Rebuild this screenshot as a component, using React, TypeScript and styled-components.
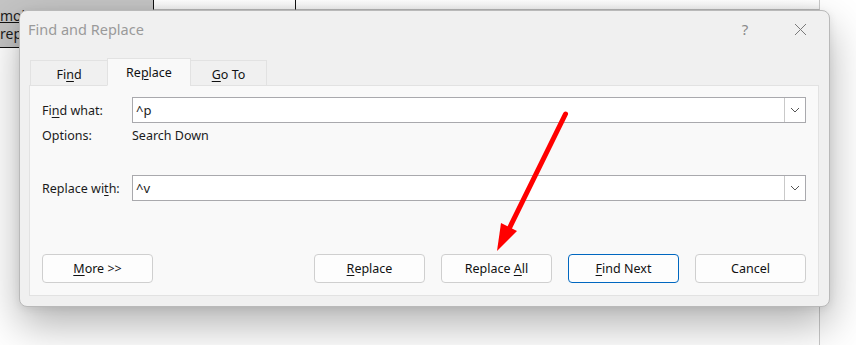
import styled, { createGlobalStyle } from 'styled-components'

const GlobalStyle = createGlobalStyle`
  html, body {
    margin: 0;
    padding: 0;
    background: #ffffff;
  }
  body {
    font-family: 'Noto Sans', 'Open Sans', sans-serif;
    color: #1b1b1b;
  }
`

const Page = styled.div`
  position: relative;
  width: 856px;
  height: 345px;
  overflow: hidden;
  background: #ffffff;
`

// document behind the dialog
const Sheet = styled.div`
  display: grid;
  grid-template-columns: 153px 142px 525px 36px;
  grid-template-rows: 10px 13px 25px 1fr;
  height: 100%;
`
const Cell = styled.div<{ $gray?: boolean; $left?: boolean; $bottom?: string; $right?: boolean; $lh?: number }>`
  background: ${(p) => (p.$gray ? '#c4c4c4' : '#ffffff')};
  border-left: ${(p) => (p.$left ? '1px solid #111' : 'none')};
  border-right: ${(p) => (p.$right ? '1px solid #c8c8c8' : 'none')};
  border-bottom: ${(p) => p.$bottom ?? 'none'};
  font-size: 14px;
  line-height: ${(p) => p.$lh ?? 20}px;
  overflow: hidden;
  white-space: nowrap;
  box-sizing: border-box;
`
const TopCell = styled(Cell)`
  background: linear-gradient(#ffffff, #f2f2f2);
`

const Dialog = styled.div`
  position: absolute;
  left: 19px;
  top: 10px;
  width: 811px;
  height: 297px;
  box-sizing: border-box;
  background: #f0f0f0;
  border: 1px solid #b9b9b9;
  border-radius: 8px;
  box-shadow: 0 18px 42px rgba(0, 0, 0, 0.3), 0 2px 8px rgba(0, 0, 0, 0.08);
  display: flex;
  flex-direction: column;
`
const TitleBar = styled.div`
  height: 38px;
  display: flex;
  align-items: center;
  padding: 0 0 0 8px;
`
const Title = styled.div`
  flex: 1;
  font-size: 14.5px;
  color: #9a9a9a;
  margin-top: -2px;
`
const TitleButton = styled.div<{ $w: number }>`
  width: ${(p) => p.$w}px;
  height: 38px;
  display: flex;
  align-items: center;
  justify-content: center;
  color: #8a8a8a;
  font-size: 15px;
  margin-top: -2px;
`

const Body = styled.div`
  padding: 9px 10px 10px 9px;
  display: flex;
  flex-direction: column;
  flex: 1;
`
const TabStrip = styled.div`
  display: flex;
  align-items: flex-end;
  height: 28px;
  padding-left: 1px;
  margin-bottom: -1px;
  position: relative;
  z-index: 1;
`
const Tab = styled.div<{ $active?: boolean; $w: number }>`
  width: ${(p) => p.$w}px;
  height: ${(p) => (p.$active ? 28 : 26)}px;
  box-sizing: border-box;
  display: flex;
  align-items: center;
  justify-content: center;
  padding-top: ${(p) => (p.$active ? 0 : 2)}px;
  font-size: 12.5px;
  background: ${(p) => (p.$active ? '#f9f9f9' : '#f0f0f0')};
  border: 1px solid #e2e2e2;
  border-bottom: ${(p) => (p.$active ? '1px solid #f9f9f9' : '1px solid #e2e2e2')};
  margin-left: ${(p) => (p.$active ? -1 : 0)}px;
  margin-right: ${(p) => (p.$active ? -1 : 0)}px;
  color: #111;
`
const Panel = styled.div`
  flex: 1;
  background: #f9f9f9;
  border: 1px solid #e2e2e2;
  padding: 11px 12px 12px 12px;
  display: flex;
  flex-direction: column;
`
const FieldRow = styled.div<{ $mt?: number }>`
  display: flex;
  align-items: center;
  margin-top: ${(p) => p.$mt ?? 0}px;
  font-size: 12.5px;
`
const Label = styled.div`
  width: 90px;
`
const Combo = styled.div`
  flex: 1;
  height: 26px;
  box-sizing: border-box;
  background: #ffffff;
  border: 1px solid #a9a9ad;
  display: flex;
  align-items: stretch;
`
const ComboText = styled.div`
  flex: 1;
  display: flex;
  align-items: center;
  padding-left: 3px;
  font-size: 13px;
`
const ComboButton = styled.div`
  width: 20px;
  border-left: 1px solid #c9c9c9;
  display: flex;
  align-items: center;
  justify-content: center;
`
const OptionsRow = styled.div`
  display: flex;
  font-size: 12.5px;
  margin-top: 3px;
  line-height: 20px;
`
const Buttons = styled.div`
  margin-top: auto;
  display: flex;
  align-items: center;
  gap: 16px;
`
const Button = styled.div<{ $primary?: boolean }>`
  width: 111px;
  height: 29px;
  box-sizing: border-box;
  display: flex;
  align-items: center;
  justify-content: center;
  font-size: 12.5px;
  background: #fdfdfd;
  border: 1px solid ${(p) => (p.$primary ? '#0067c0' : '#cfcfcf')};
  border-radius: 4px;
  color: #111;
`
const Spacer = styled.div`
  flex: 1;
`

const Arrow = styled.svg`
  position: absolute;
  left: 0;
  top: 0;
  pointer-events: none;
`

const U = styled.span`
  text-decoration: underline;
  text-underline-offset: 2px;
`

const Chevron = () => (
  <svg width="10" height="6" viewBox="0 0 10 6">
    <path d="M1 1 L5 5 L9 1" fill="none" stroke="#555" strokeWidth="1" />
  </svg>
)

const CloseIcon = () => (
  <svg width="13" height="13" viewBox="0 0 13 13">
    <path d="M1 1 L12 12 M12 1 L1 12" stroke="#7a7a7a" strokeWidth="1" />
  </svg>
)

const App = () => (
  <Page>
    <GlobalStyle />
    <Sheet>
      <Cell $gray />
      <TopCell $left $bottom="1px solid #b5b5b5" />
      <TopCell $left $bottom="1px solid #b5b5b5" $right />
      <Cell />
      <Cell $gray $bottom="1px solid #111" $lh={11}>mob</Cell>
      <Cell $left />
      <Cell $right />
      <Cell />
      <Cell $gray $bottom="1px solid #111" $lh={22}>rep</Cell>
      <Cell />
      <Cell $right />
      <Cell />
      <Cell />
      <Cell />
      <Cell $right />
      <Cell />
    </Sheet>

    <Dialog>
      <TitleBar>
        <Title>Find and Replace</Title>
        <TitleButton $w={52}>?</TitleButton>
        <TitleButton $w={58}>
          <CloseIcon />
        </TitleButton>
      </TitleBar>
      <Body>
        <TabStrip>
          <Tab $w={78}>
            <span>
              Fi<U>n</U>d
            </span>
          </Tab>
          <Tab $w={84} $active>
            <span>
              Re<U>p</U>lace
            </span>
          </Tab>
          <Tab $w={77}>
            <span>
              <U>G</U>o To
            </span>
          </Tab>
        </TabStrip>
        <Panel>
          <FieldRow>
            <Label>
              Fi<U>n</U>d what:
            </Label>
            <Combo>
              <ComboText>^p</ComboText>
              <ComboButton>
                <Chevron />
              </ComboButton>
            </Combo>
          </FieldRow>
          <OptionsRow>
            <Label>Options:</Label>
            <div>Search Down</div>
          </OptionsRow>
          <FieldRow $mt={29}>
            <Label>
              Replace wi<U>t</U>h:
            </Label>
            <Combo>
              <ComboText>^v</ComboText>
              <ComboButton>
                <Chevron />
              </ComboButton>
            </Combo>
          </FieldRow>
          <Buttons>
            <Button>
              <span>
                <U>M</U>ore &gt;&gt;
              </span>
            </Button>
            <Spacer />
            <Button>
              <span>
                <U>R</U>eplace
              </span>
            </Button>
            <Button>
              <span>
                Replace <U>A</U>ll
              </span>
            </Button>
            <Button $primary>
              <span>
                <U>F</U>ind Next
              </span>
            </Button>
            <Button>Cancel</Button>
          </Buttons>
        </Panel>
      </Body>
    </Dialog>

    <Arrow width="856" height="345" viewBox="0 0 856 345">
      <path d="M565.5 114 L509 229" stroke="#ff0000" strokeWidth="5" strokeLinecap="round" fill="none" />
      <path d="M497 251 L501 223 L517 231 Z" fill="#ff0000" />
    </Arrow>
  </Page>
)

export default App
